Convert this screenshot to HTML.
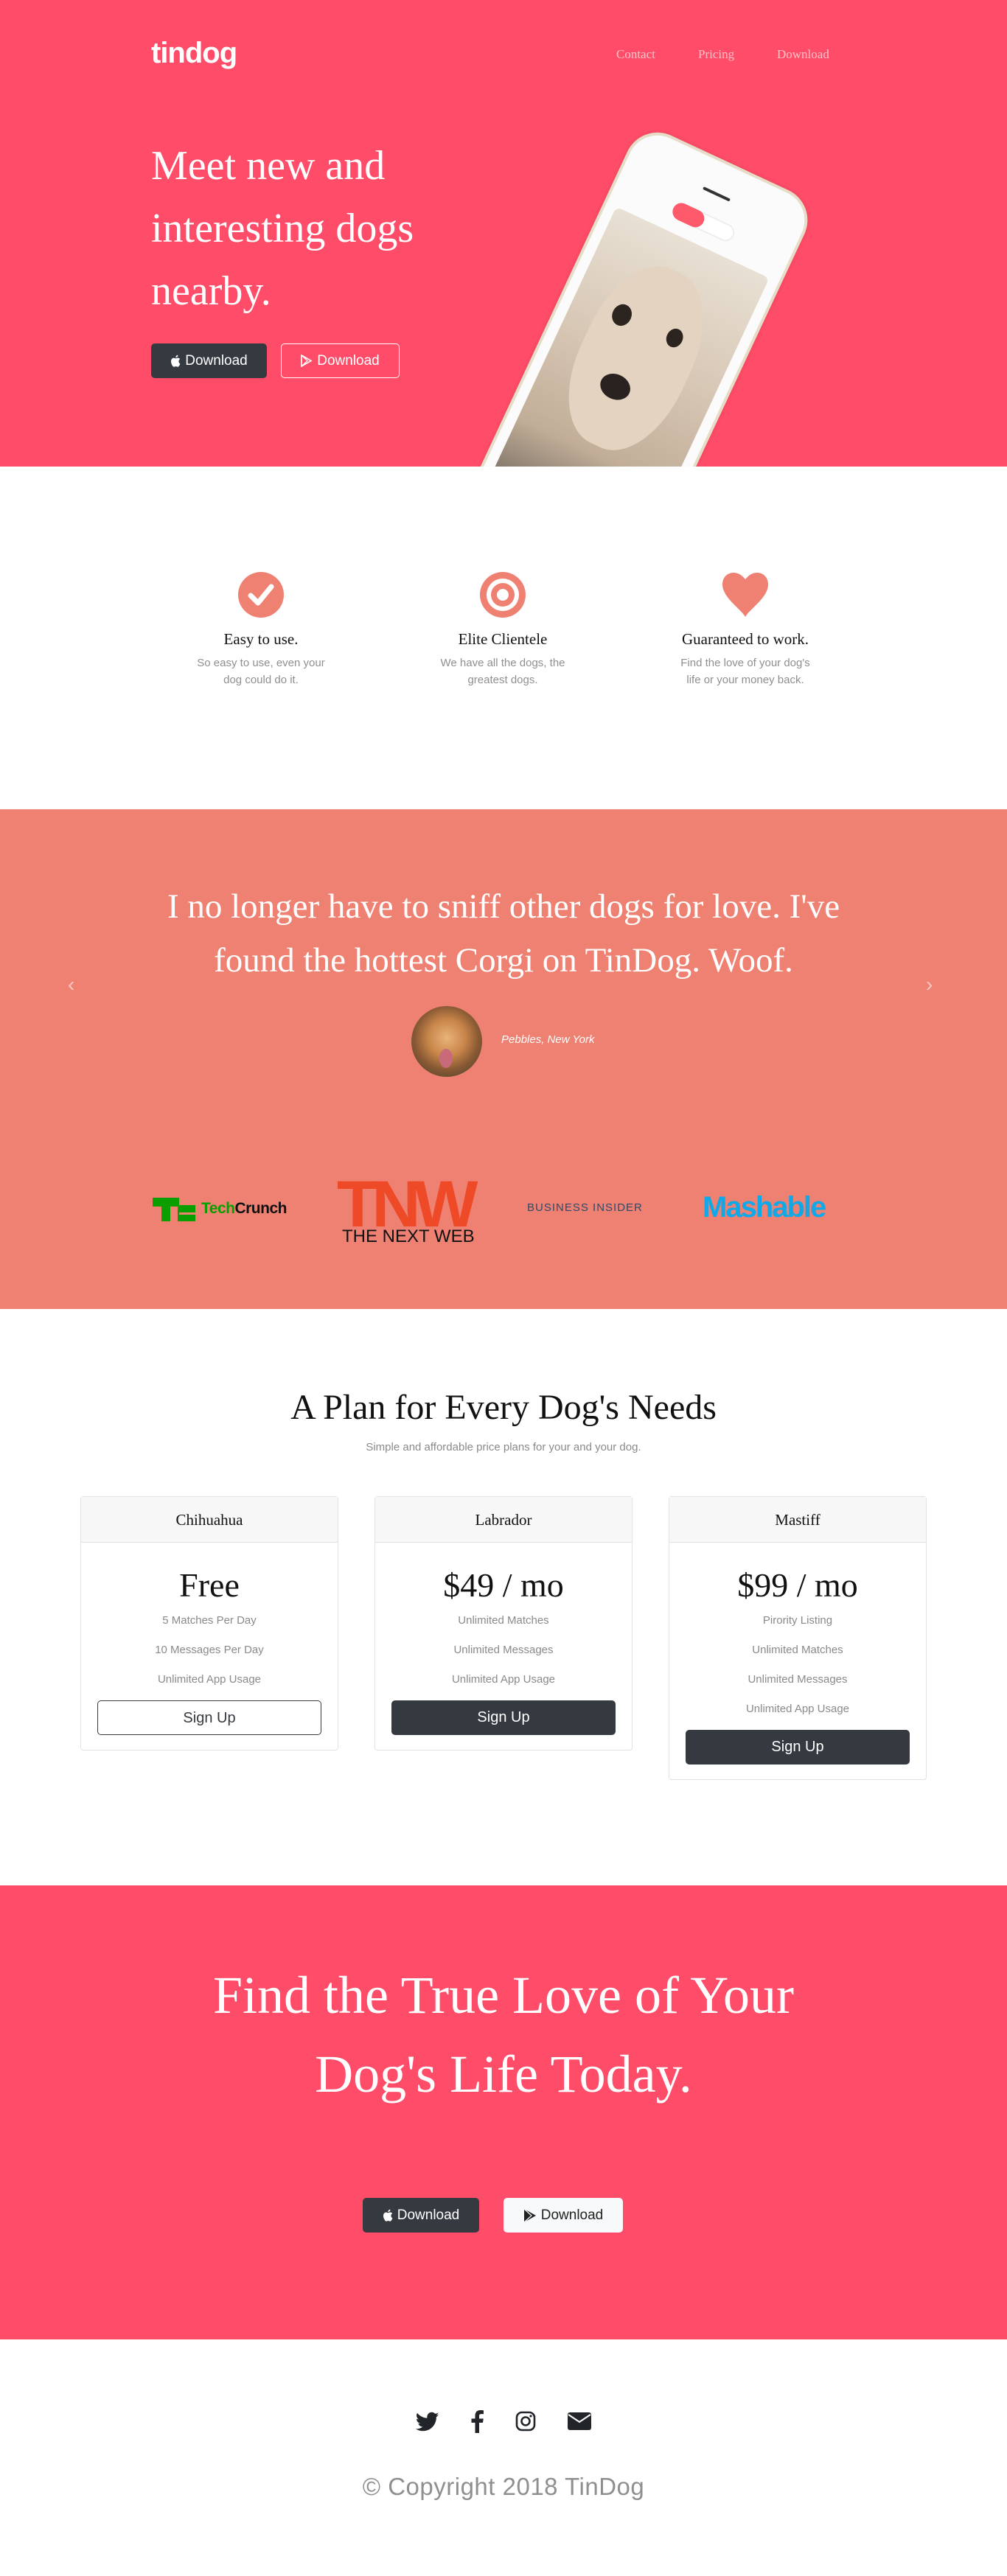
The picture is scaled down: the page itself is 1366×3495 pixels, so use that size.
<!DOCTYPE html>
<html><head><meta charset="utf-8"><style>
*{box-sizing:border-box;margin:0;padding:0}
body{width:1366px;height:3495px;font-family:"Liberation Sans",sans-serif;background:#fff;position:relative;overflow:hidden}
.abs{position:absolute}
.serif{font-family:"Liberation Serif",serif}
#hero{position:absolute;left:0;top:0;width:1366px;height:633px;background:#ff4c68;overflow:hidden}
.btn{position:absolute;height:47px;border-radius:5px;font-size:19px;display:flex;align-items:center;justify-content:center;gap:6px}
.dark{background:#343a40;color:#fff}
.outline{border:1px solid #fff;color:#fff}
.light{background:#f8f9fa;color:#222}
.feat{position:absolute;width:240px;text-align:center}
.feat h3{font-family:"Liberation Serif",serif;font-weight:normal;font-size:21px;color:#111;margin-top:0}
.feat p{font-size:15px;color:#8f8f8f;line-height:23px;margin-top:8px}
#testi{position:absolute;left:0;top:1098px;width:1366px;height:678px;background:#ef8172}
.card{position:absolute;top:2030px;width:350px;border:1px solid #e2e2e2;border-radius:4px;text-align:center;background:#fff}
.card .hd{height:62px;background:#f7f7f7;border-bottom:1px solid #e2e2e2;font-family:"Liberation Serif",serif;font-size:21px;line-height:62px;color:#111}
.card .pr{font-family:"Liberation Serif",serif;font-size:46px;color:#111;margin-top:30px;line-height:56px}
.card .li{font-size:15px;color:#8a8a8a;line-height:40px}
.card .li:first-of-type{margin-top:10px}
.card .sb{margin:8px 22px 20px;height:47px;border-radius:5px;font-size:20px;line-height:47px}
#cta{position:absolute;left:0;top:2558px;width:1366px;height:616px;background:#ff4c68}
</style></head><body>
<div id="hero">
  <div class="abs" style="left:205px;top:50px;font-size:40px;font-weight:bold;color:#fff;letter-spacing:-1px">tindog</div>
  <div class="abs serif" style="left:836px;top:64px;font-size:17px;color:#ffc0c8">Contact</div>
  <div class="abs serif" style="left:947px;top:64px;font-size:17px;color:#ffc0c8">Pricing</div>
  <div class="abs serif" style="left:1054px;top:64px;font-size:17px;color:#ffc0c8">Download</div>
  <div class="abs serif" style="left:205px;top:183px;font-size:56px;line-height:85px;color:#fff;width:440px">Meet new and interesting dogs nearby.</div>
  <div class="btn dark" style="left:205px;top:466px;width:157px"><svg width="14" height="17" viewBox="0 0 14 17"><path fill="#fff" d="M11.5 9c0-2 1.6-2.8 1.7-2.9-1-1.4-2.4-1.5-2.9-1.5-1.2-.1-2.4.7-3 .7s-1.6-.7-2.6-.7C3.3 4.6 1 5.9 1 9.2c0 1 .2 2 .5 3 .5 1.4 2 4.6 3.6 4.5.8 0 1.4-.6 2.5-.6 1 0 1.6.6 2.5.6 1.6 0 2.9-2.9 3.3-4.2-2-.9-1.9-2.7-1.9-3.5zM9.6 3.1C10.5 2 10.4 1 10.4.6 9.6.7 8.7 1.2 8.2 1.8 7.6 2.4 7.3 3.2 7.3 4c.9.1 1.7-.4 2.3-.9z"/></svg>Download</div>
  <div class="btn outline" style="left:381px;top:466px;width:161px"><svg width="16" height="17" viewBox="0 0 16 17"><path d="M1 1l13 7.5L1 16z" fill="none" stroke="#fff" stroke-width="1.6"/><path d="M1 1l8 7.5L1 16" fill="none" stroke="#fff" stroke-width="1.2"/></svg>Download</div>
  <div class="abs" style="left:870px;top:165px;width:265px;height:720px;border-radius:45px;background:#fbfbfb;border:4px solid #e6dcc8;transform:rotate(25deg);transform-origin:0 0;box-shadow:0 0 6px rgba(0,0,0,.1)">
    <div class="abs" style="left:14px;top:115px;width:229px;height:420px;border-radius:8px;background:linear-gradient(180deg,#e8e0d4,#d8c8b6 40%,#c2ae98 75%,#6f665c);"></div>
    <div class="abs" style="left:50px;top:160px;width:150px;height:260px;border-radius:45%;background:#e4d3c0"></div>
    <div class="abs" style="left:70px;top:230px;width:26px;height:30px;border-radius:50%;background:#2c241f"></div>
    <div class="abs" style="left:150px;top:230px;width:22px;height:26px;border-radius:50%;background:#2c241f"></div>
    <div class="abs" style="left:95px;top:320px;width:42px;height:34px;border-radius:50%;background:#2a2220"></div>
    <div class="abs" style="left:85px;top:72px;width:90px;height:24px;border-radius:12px;border:2px solid #eee;background:#fff"></div>
    <div class="abs" style="left:85px;top:72px;width:45px;height:24px;border-radius:12px;background:#ff5a6c"></div>
    <div class="abs" style="left:110px;top:40px;width:40px;height:4px;background:#333;border-radius:2px"></div>
  </div>
</div>

<div class="abs" style="left:322px;top:775px"><svg width="64" height="64" viewBox="0 0 64 64"><circle cx="32" cy="32" r="31" fill="#ef8172"/><path d="M18 33l10 10 18-22" fill="none" stroke="#fff" stroke-width="7" stroke-linecap="round" stroke-linejoin="round"/></svg></div>
<div class="abs" style="left:650px;top:775px"><svg width="64" height="64" viewBox="0 0 64 64"><circle cx="32" cy="32" r="31" fill="#ef8172"/><circle cx="32" cy="32" r="22" fill="#fff"/><circle cx="32" cy="32" r="16" fill="#ef8172"/><circle cx="32" cy="32" r="8" fill="#fff"/></svg></div>
<div class="abs" style="left:978px;top:775px"><svg width="66" height="64" viewBox="0 0 66 64"><path d="M33 62C28 52 2 36 2 18 2 8 9 2 17 2c7 0 12 4 16 9 4-5 9-9 16-9 8 0 15 6 15 16 0 18-26 34-31 44z" fill="#ef8172"/></svg></div>
<div class="feat" style="left:234px;top:855px"><h3>Easy to use.</h3><p>So easy to use, even your<br>dog could do it.</p></div>
<div class="feat" style="left:562px;top:855px"><h3>Elite Clientele</h3><p>We have all the dogs, the<br>greatest dogs.</p></div>
<div class="feat" style="left:891px;top:855px"><h3>Guaranteed to work.</h3><p>Find the love of your dog's<br>life or your money back.</p></div>

<div id="testi">
  <div class="abs serif" style="left:0;top:96px;width:1366px;text-align:center;font-size:47px;line-height:73px;color:#fff">I no longer have to sniff other dogs for love. I've<br>found the hottest Corgi on TinDog. Woof.</div>
  <div class="abs" style="left:92px;top:222px;color:#f8c8c0;font-size:28px">&#8249;</div>
  <div class="abs" style="left:1256px;top:222px;color:#f8c8c0;font-size:28px">&#8250;</div>
  <div class="abs" style="left:558px;top:267px;width:96px;height:96px;border-radius:50%;background:radial-gradient(circle at 50% 45%,#e9b37a 0,#c9864a 35%,#8a5a34 60%,#3a3a30 100%)"></div>
  <div class="abs" style="left:596px;top:325px;width:18px;height:26px;border-radius:50%;background:#c96a7a"></div>
  <div class="abs" style="left:680px;top:304px;color:#fff;font-style:italic;font-size:15px">Pebbles, New York</div>
  <div class="abs" style="left:207px;top:527px;width:58px;height:32px">
    <div class="abs" style="left:0;top:0;width:36px;height:12px;background:#0a9e01"></div>
    <div class="abs" style="left:12px;top:0;width:12px;height:32px;background:#0a9e01"></div>
    <div class="abs" style="left:34px;top:10px;width:24px;height:22px;background:#0a9e01"></div>
    <div class="abs" style="left:36px;top:20px;width:22px;height:3px;background:#ef8172"></div>
  </div>
  <div class="abs" style="left:273px;top:530px;font-size:21px;font-weight:bold;letter-spacing:-0.5px"><span style="color:#0a9e01">Tech</span><span style="color:#111">Crunch</span></div>
  <div class="abs" style="left:457px;top:496px;width:205px;height:70px;overflow:hidden"><div style="font-size:92px;font-weight:bold;color:#ef4a28;letter-spacing:-9px;line-height:82px">TNW</div></div>
  <div class="abs" style="left:464px;top:566px;font-size:24px;color:#111">THE NEXT WEB</div>
  <div class="abs" style="left:715px;top:532px;font-size:15px;color:#2f4a6a;letter-spacing:1px">BUSINESS INSIDER</div>
  <div class="abs" style="left:953px;top:518px;font-size:40px;font-weight:bold;color:#0fa8e8;letter-spacing:-2px">Mashable</div>
</div>

<div class="abs serif" style="left:0;top:1882px;width:1366px;text-align:center;font-size:48px;color:#111">A Plan for Every Dog's Needs</div>
<div class="abs" style="left:0;top:1955px;width:1366px;text-align:center;font-size:15px;color:#8a8a8a">Simple and affordable price plans for your and your dog.</div>

<div class="card" style="left:109px"><div class="hd">Chihuahua</div><div class="pr">Free</div><div class="li">5 Matches Per Day</div><div class="li">10 Messages Per Day</div><div class="li">Unlimited App Usage</div><div class="sb" style="border:1px solid #343a40;color:#343a40">Sign Up</div></div>
<div class="card" style="left:508px"><div class="hd">Labrador</div><div class="pr">$49 / mo</div><div class="li">Unlimited Matches</div><div class="li">Unlimited Messages</div><div class="li">Unlimited App Usage</div><div class="sb dark">Sign Up</div></div>
<div class="card" style="left:907px"><div class="hd">Mastiff</div><div class="pr">$99 / mo</div><div class="li">Pirority Listing</div><div class="li">Unlimited Matches</div><div class="li">Unlimited Messages</div><div class="li">Unlimited App Usage</div><div class="sb dark">Sign Up</div></div>

<div id="cta">
  <div class="abs serif" style="left:0;top:96px;width:1366px;text-align:center;font-size:72px;line-height:107px;color:#fff">Find the True Love of Your<br>Dog's Life Today.</div>
  <div class="btn dark" style="left:492px;top:424px;width:158px"><svg width="14" height="17" viewBox="0 0 14 17"><path fill="#fff" d="M11.5 9c0-2 1.6-2.8 1.7-2.9-1-1.4-2.4-1.5-2.9-1.5-1.2-.1-2.4.7-3 .7s-1.6-.7-2.6-.7C3.3 4.6 1 5.9 1 9.2c0 1 .2 2 .5 3 .5 1.4 2 4.6 3.6 4.5.8 0 1.4-.6 2.5-.6 1 0 1.6.6 2.5.6 1.6 0 2.9-2.9 3.3-4.2-2-.9-1.9-2.7-1.9-3.5zM9.6 3.1C10.5 2 10.4 1 10.4.6 9.6.7 8.7 1.2 8.2 1.8 7.6 2.4 7.3 3.2 7.3 4c.9.1 1.7-.4 2.3-.9z"/></svg>Download</div>
  <div class="btn light" style="left:683px;top:424px;width:162px"><svg width="18" height="20" viewBox="0 0 18 20"><path d="M1 1l16 9-16 9z" fill="#222"/><path d="M1 1l10 9-10 9" fill="none" stroke="#f8f9fa" stroke-width="1.2"/></svg>Download</div>
</div>

<div class="abs" style="left:564px;top:3272px"><svg width="32" height="28" viewBox="0 0 24 20"><path fill="#212529" d="M23.6 2.4c-.9.4-1.8.6-2.8.8 1-.6 1.8-1.5 2.1-2.7-.9.6-2 1-3.1 1.2C18.9.7 17.6.1 16.3.1c-2.7 0-4.8 2.2-4.8 4.8 0 .4 0 .8.1 1.1C7.5 5.8 3.900 3.9 1.5.9c-.4.7-.7 1.600-.7 2.4 0 1.7.9 3.2 2.2 4-.8 0-1.5-.2-2.2-.6v.1c0 2.3 1.7 4.3 3.9 4.7-.4.1-.8.2-1.3.2-.3 0-.6 0-.9-.1.6 1.9 2.4 3.3 4.5 3.4-1.7 1.3-3.7 2.1-6 2.1-.4 0-.8 0-1.2-.1 2.1 1.4 4.7 2.2 7.4 2.2 8.9 0 13.7-7.4 13.7-13.7v-.6c1-.7 1.8-1.6 2.5-2.5z"/></svg></div>
<div class="abs" style="left:638px;top:3269px"><svg width="18" height="32" viewBox="0 0 18 32"><path fill="#212529" d="M12 32V18h5l.8-5.5H12V9c0-1.6.5-2.7 2.8-2.7H18V1.3C17.4 1.2 15.6 1 13.6 1 9.3 1 6.5 3.6 6.5 8.4v4.1H1.5V18h5v14z"/></svg></div>
<div class="abs" style="left:699px;top:3271px"><svg width="28" height="28" viewBox="0 0 28 28"><rect x="2" y="2" width="24" height="24" rx="7" fill="none" stroke="#212529" stroke-width="2.6"/><circle cx="14" cy="14" r="5.5" fill="none" stroke="#212529" stroke-width="2.6"/><circle cx="21" cy="7" r="1.6" fill="#212529"/></svg></div>
<div class="abs" style="left:770px;top:3273px"><svg width="32" height="24" viewBox="0 0 32 24"><rect x="0" y="0" width="32" height="24" rx="3" fill="#212529"/><path d="M1 3l15 10 15-10" fill="none" stroke="#fff" stroke-width="2"/></svg></div>
<div class="abs" style="left:0;top:3355px;width:1366px;text-align:center;font-size:33px;color:#8f8f8f;letter-spacing:0.5px">© Copyright 2018 TinDog</div>
</body></html>
